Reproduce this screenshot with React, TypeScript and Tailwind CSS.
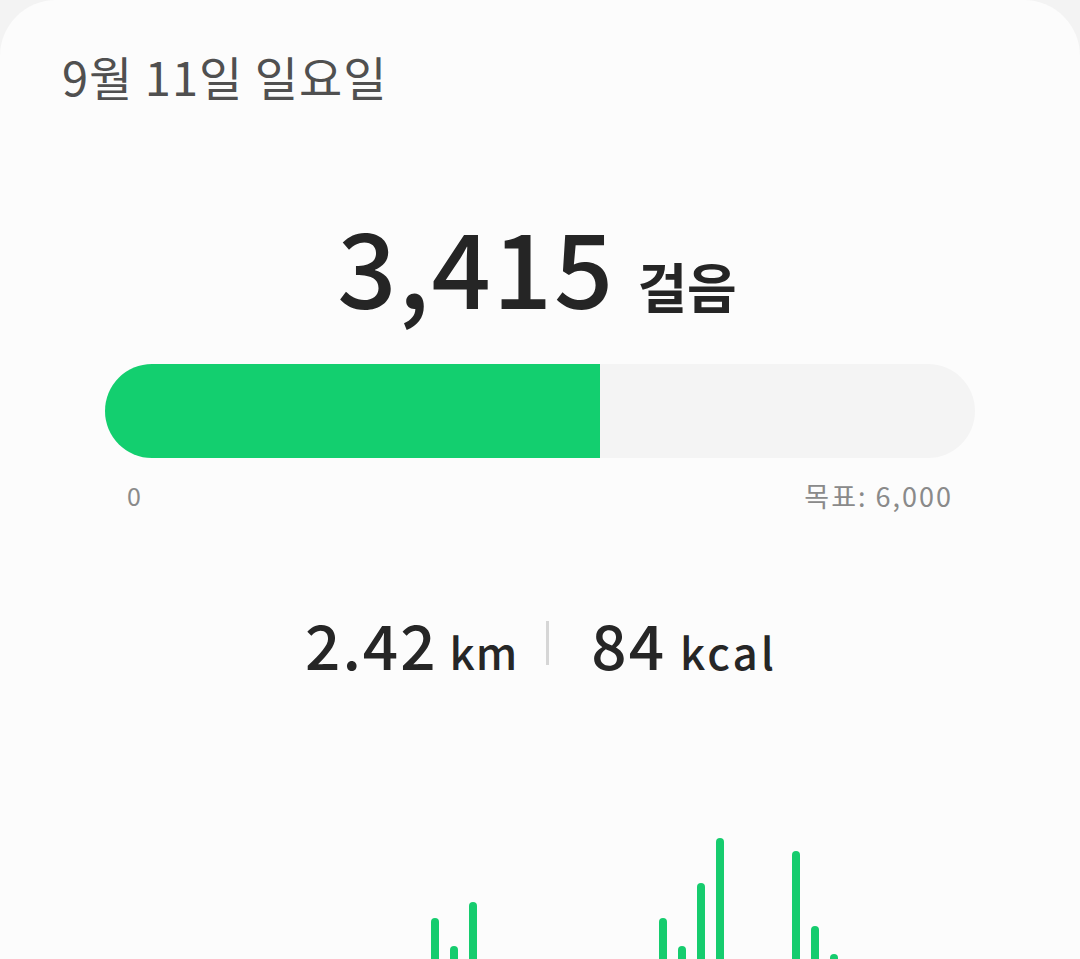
import React from "react";

const bars = [82, 54, 98, 0, 0, 0, 0, 0, 0, 0, 0, 0, 82, 54, 117, 162, 0, 0, 0, 149, 74, 46];

export default function App() {
  return (
    <div
      className="min-h-screen w-[1080px] overflow-hidden bg-[#f3f3f3]"
      style={{ fontFamily: '"Noto Sans CJK KR", "Noto Sans", sans-serif' }}
    >
      <div className="h-[1040px] w-full rounded-t-[56px] bg-[#fcfcfc]">
        <div className="pl-[62px] pt-[52px] text-[47px] leading-none tracking-[1px] text-[#505050]">9월 11일 일요일</div>

        <div className="mt-[113px] flex items-baseline justify-center pr-[6px] text-[#252525]">
          <span className="text-[104px] font-medium leading-none tracking-[2px]">3,415</span>
          <span className="ml-[22px] text-[54px] font-bold leading-none">걸음</span>
        </div>

        <div className="mx-[105px] mt-[48px] flex h-[94px] overflow-hidden rounded-full bg-[#f4f4f4]">
          <div className="h-full w-[495px] bg-[#13cf6f]" />
        </div>
        <div className="mx-[127px] mt-[24px] flex items-center justify-between text-[#8a8a8a]">
          <span className="text-[25px] leading-none">0</span>
          <span className="text-[27px] leading-none tracking-[2px]">목표: 6,000</span>
        </div>

        <div className="mt-[103px] flex items-center justify-center pl-[2px] text-[#262626]">
          <div className="flex items-baseline">
            <span className="text-[62px] font-medium leading-none tracking-[2px]">2.42</span>
            <span className="ml-[12px] text-[44px] font-medium leading-none tracking-[1px]">km</span>
          </div>
          <div className="ml-[28px] mr-[42px] h-[44px] w-[3px] bg-[#d6d6d6]" />
          <div className="flex items-baseline">
            <span className="text-[62px] font-medium leading-none tracking-[2px]">84</span>
            <span className="ml-[14px] text-[44px] font-medium leading-none tracking-[3px]">kcal</span>
          </div>
        </div>

        <div className="mt-[156px] flex h-[170px] items-end gap-[11px] pl-[431px]">
          {bars.map((h, i) => (
            <div key={i} className="w-[8px] rounded-t-full bg-[#16cc6e]" style={{ height: h }} />
          ))}
        </div>
      </div>
    </div>
  );
}
